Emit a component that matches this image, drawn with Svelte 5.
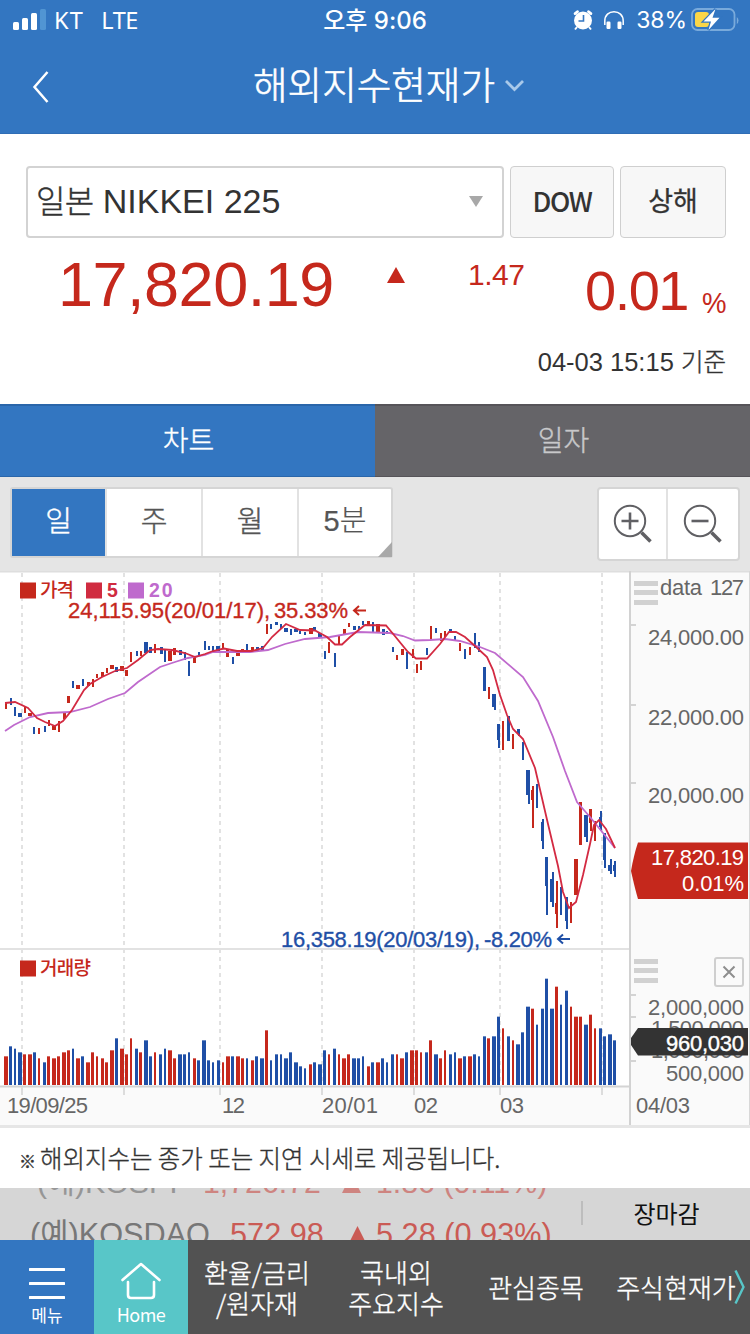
<script>
  const R = '#c5281c';
  const B = '#1f4fa6';

  // Sub-pixel units: every chart series is stored at three units per pixel.
  const priceGroups = [
    { x: 0, y: 1710, bars: [
      [18,398,415,'r'],[32,383,405,'b'],[45,410,437,'b'],[60,428,440,'b',12],[74,410,428,'r'],[90,430,440,'r',12],[103,470,490,'b'],[117,473,490,'r'],[134,467,485,'b'],[147,450,467,'r'],[162,467,480,'r',12],[177,453,485,'r'],[192,426,447,'r',9],[206,378,398,'r',9],[219,332,353,'b'],[234,344,355,'r',12],[249,327,349,'b'],[265,337,348,'r',9],[279,327,350,'r'],[291,312,323,'r'],[308,306,320,'r',9],[320,295,310,'r'],[336,285,297,'r',12],[350,290,305,'b',9],[367,288,302,'r',12],[380,300,319,'r',9],[393,245,275,'r'],[410,242,257,'b'],[422,244,258,'r'],[439,215,248,'b',12],[452,230,247,'b',9],[465,222,248,'r'],[483,230,252,'b',9],[495,240,277,'b'],[511,242,272,'r',12],[523,235,257,'r',9],[541,240,256,'b',9],[554,247,272,'b'],[567,272,316,'b'],[584,258,280,'r',9],[597,245,258,'b'],[615,212,240,'b'],[627,227,240,'b'],[640,228,247,'b'],[655,228,250,'b',10]
    ] },
    { x: 630, y: 1710, bars: [
      [10,228,250,'b'],[25,228,250,'b',12],[39,218,235,'r'],[54,237,262,'r',10],[69,260,280,'b'],[84,240,257,'r',12],[97,237,250,'r',9],[111,222,243,'b'],[128,232,248,'r',9],[141,232,243,'b',9],[157,229,242,'b',9],[170,162,193,'r'],[183,163,179,'b'],[200,155,165,'b',9],[213,162,178,'b'],[228,175,187,'b',12],[243,178,196,'b'],[258,178,188,'b',12],[271,182,190,'b'],[285,187,195,'b'],[302,174,193,'r',12],[314,171,184,'b',9],[331,190,205,'b',12],[344,242,265,'b'],[357,215,248,'r'],[375,248,290,'b'],[387,195,225,'r'],[402,177,195,'r',9],[417,160,173,'r'],[434,168,181,'b',9],[447,168,180,'b'],[460,153,165,'b'],[475,153,165,'r',9],[488,155,185,'b'],[504,162,187,'r',12],[519,177,195,'b',9],[532,184,193,'b'],[548,231,247,'b'],[561,256,271,'r'],[577,238,257,'r',9],[591,247,297,'b'],[608,237,265,'r'],[621,282,310,'r'],[633,273,301,'r']
    ] },
    { x: 1260, y: 1710, bars: [
      [20,235,257,'b'],[32,168,211,'r'],[48,174,190,'b'],[63,190,213,'r'],[75,182,200,'r'],[92,178,190,'b',9],[105,197,212,'b'],[121,218,243,'r'],[134,237,268,'b'],[151,232,256,'r'],[165,188,232,'b'],[177,215,244,'b'],[193,290,363,'b',8],[206,350,387,'r'],[222,371,410,'b',12],[225,400,422,'b'],[235,461,510,'b',8],[238,500,532,'b'],[249,453,541,'r'],[265,437,512,'b',9],[279,493,538,'r'],[294,476,490,'b',9],[297,480,497,'b'],[308,515,568,'b']
    ] },
    { x: 1260, y: 2280, bars: [
      [323,31,105,'b',12],[327,31,134,'b'],[335,90,120,'r'],[339,78,203,'r'],[351,73,146,'b'],[366,185,243,'b'],[369,177,268,'b'],[378,290,378,'b'],[381,290,465,'b'],[393,358,428,'b'],[399,336,440,'b'],[407,428,460,'r'],[411,362,502,'r'],[423,381,466,'b'],[438,410,483,'b'],[441,410,505,'b'],[453,426,490,'r'],[467,298,405,'r',12],[481,126,256,'r',9],[497,164,230,'b',12],[501,164,246,'b'],[511,146,187,'r',9],[513,146,212,'r'],[525,183,242,'r'],[540,170,200,'b'],[543,153,211,'b'],[553,219,300,'b',9],[555,219,325,'b'],[567,315,332,'b'],[573,297,342,'b'],[581,316,333,'b'],[585,303,352,'b']
    ] }
  ];

  const volumeGroups = [
    { x: 0, bars: [
      [18,409,'r',12],[31,379,'b',9],[45,386,'b',6],[60,397,'b',12],[73,403,'r',9],[90,403,'r',12],[103,397,'b',9],[117,415,'r',6],[133,427,'b',9],[145,409,'r',9],[162,415,'r',12],[175,409,'r',9],[192,397,'r',12],[205,391,'r',9],[219,386,'b',6],[234,415,'r',12],[247,409,'b',9],[264,427,'r',12],[277,397,'r',9],[291,409,'r',6],[307,415,'r',9],[319,427,'r',9],[336,391,'r',12],[349,355,'b',9],[366,386,'r',12],[379,403,'r',9],[393,355,'r',6],[409,386,'b',9],[421,397,'r',9],[438,361,'b',12],[451,409,'b',9],[465,397,'r',6],[481,403,'b',9],[495,386,'b',6],[510,391,'r',12],[523,415,'r',9],[540,403,'b',12],[553,403,'b',9],[567,397,'b',6],[583,415,'r',9],[595,421,'b',9],[612,361,'b',12],[625,421,'b',9],[639,427,'b',6],[655,421,'b',9],[669,427,'r',6],[684,409,'r',12],[697,409,'b',9],[714,409,'r',12],[727,415,'r',9],[741,415,'b',6],[757,421,'r',9],[769,409,'b',9],[786,415,'b',12],[799,331,'r',9],[813,421,'b',6],[829,403,'b',9],[843,403,'b',6],[858,415,'b',12],[871,397,'b',9],[888,427,'b',12],[901,439,'b',9],[915,445,'b',6]
    ] },
    { x: 930, bars: [
      [1,433,'r',9],[13,427,'b',9],[30,433,'b',12],[43,391,'b',9],[57,403,'r',6],[73,386,'b',9],[87,403,'r',6],[102,415,'r',12],[115,403,'r',9],[132,415,'b',12],[145,415,'b',9],[159,409,'b',6],[175,439,'r',9],[187,427,'b',9],[204,427,'r',12],[217,415,'b',9],[231,427,'b',6],[247,403,'b',9],[261,403,'r',6],[276,415,'r',12],[289,397,'b',9],[306,391,'r',12],[319,391,'r',9],[333,397,'r',6],[349,397,'b',9],[361,361,'r',9],[378,403,'b',12],[391,415,'r',9],[405,391,'r',6],[421,403,'b',9],[435,397,'b',6],[450,415,'r',12],[463,409,'b',9],[480,409,'r',12],[493,403,'b',9],[507,409,'b',6],[523,349,'b',9],[535,355,'r',9],[552,349,'b',12],[565,290,'b',9],[579,325,'r',6],[595,349,'b',9],[609,361,'r',6],[624,373,'b',12],[637,337,'b',9],[654,260,'b',12],[667,266,'r',9],[681,314,'b',6],[697,266,'b',9],[709,176,'b',9],[726,266,'b',12],[739,200,'r',9],[753,254,'b',6],[769,212,'b',9],[783,260,'r',6],[798,290,'r',12],[811,290,'r',9],[828,314,'b',12],[841,284,'r',9],[855,325,'r',6],[871,325,'b',9],[883,349,'b',9],[900,343,'b',12],[913,361,'b',9]
    ] }
  ];

  const color = (c) => (c === 'r' ? R : B);
  const candles = priceGroups.flatMap((g) =>
    g.bars.map(([x, a, b, c, w = 6]) => ({
      x: Math.round((g.x + x - w / 2) / 3), y: Math.round((g.y + a) / 3),
      w: Math.round(w / 3), h: Math.round((b - a) / 3), fill: color(c)
    }))
  );
  const volumes = volumeGroups.flatMap((g) =>
    g.bars.map(([x, top, c, w]) => ({
      x: Math.round((g.x + x - w / 2) / 3), y: 920 + top / 3, w: w / 3, h: (495 - top) / 3, fill: color(c)
    }))
  );

  const ma5 = '5,703 15,702 28,708 37,718 45,722 55,726 63,721 72,710 84,690 90,684 102,677 115,671 127,668 138,660 150,650 158,649 172,650 185,653 195,657 205,654 213,651 224,648.5 237,651 252,651 263,648 272,637 286,624 300,630 315,630.5 327,637 335,644.5 342,644.5 350,637 365,625 386,625.5 394,635 408,652 416,658.5 427,658.5 440,644 449,632 456,632 465,637 475,646 487,657 493,670 500,695 507,715 513,729 523,739 535,768 548,824 558,866 563,892 569,908 576,902 583,875 590,844 594,825 599,820 606,829 615,848';
  const ma20 = '5,731 14,725 30,717 48,713 70,712 90,707 108,699 125,693 138,682 160,667 175,662 188,658 205,655 213,652 250,652 268,650 285,644 305,639 330,637 358,632 390,633 403,636 415,640.5 430,640 445,639 460,641 480,647 495,653 523,677 538,701 553,737 565,771 577,802 590,817 603,833 615,848';

  const gridX = [22, 124, 220, 322, 414, 500, 602];
  const dates = [
    ['19/09/25', 7, 81], ['12', 222, 23], ['20/01', 322, 56], ['02', 414, 24], ['03', 500, 24], ['04/03', 636, 54]
  ];
  const prices = [['24,000.00', 644.5], ['22,000.00', 724.5], ['20,000.00', 802.5]];
</script>

<div class="app">
  <header>
    <div class="status">
      <div class="left">
        <svg width="34" height="22" viewBox="0 0 34 22">
          <rect x="0" y="13" width="6" height="8" rx="1.5" fill="#fff" />
          <rect x="9" y="9" width="6" height="12" rx="1.5" fill="#fff" />
          <rect x="18" y="4" width="6" height="17" rx="1.5" fill="#fff" />
          <rect x="27" y="0" width="6" height="21" rx="1.5" fill="#5195d3" />
        </svg>
        <span class="kt">KT</span><span class="lte">LTE</span>
      </div>
      <div class="time">오후 9:06</div>
      <div class="right">
        <svg width="20" height="22" viewBox="0 0 20 22">
          <circle cx="10" cy="11.5" r="9" fill="#fff" />
          <path d="M2 4.600 4.600 2.600M18 4.600 15.400 2.600" stroke="#fff" stroke-width="2.600" stroke-linecap="round" />
          <path d="M4 18 2 20.500M16 18l2 2.500" stroke="#fff" stroke-width="2" />
          <path d="M10.500 6v6H5.500" fill="none" stroke="#3376c1" stroke-width="1.600" />
        </svg>
        <svg class="phones" width="22" height="20" viewBox="0 0 22 20">
          <path d="M1.800 15V11C1.800 5 6 1.700 11 1.700S20.200 5 20.200 11v4" fill="none" stroke="#fff" stroke-width="1.500" />
          <rect x="3.500" y="11.500" width="4" height="7.500" rx="1.200" fill="#fff" />
          <rect x="14.500" y="11.500" width="4" height="7.500" rx="1.200" fill="#fff" />
        </svg>
        <span class="pct">38%</span>
        <svg width="48" height="26" viewBox="0 0 48 26">
          <rect x="1" y="2" width="42.500" height="21" rx="5.500" fill="none" stroke="#79aadb" stroke-width="1.800" />
          <path d="M45.800 10v7q1.700-1 1.700-3.500T45.800 10z" fill="#79aadb" />
          <rect x="4" y="5" width="14" height="15" rx="3" fill="#fad648" />
          <path d="M24.500 2 12.500 14.500h7.500L17.500 23 28.500 10.800h-7z" fill="#fff" stroke="#3376c1" stroke-width="2.500" paint-order="stroke" />
        </svg>
      </div>
    </div>
    <div class="titlebar">
      <svg class="back" width="18" height="34" viewBox="0 0 18 34"><path d="M15.500 2 2.500 17 15.500 32" fill="none" stroke="#fff" stroke-width="2.500" /></svg>
      <h1>해외지수현재가</h1>
      <svg width="22" height="14" viewBox="0 0 22 14"><path d="M2 1l8.500 8.500L19 1" fill="none" stroke="#a9c9ea" stroke-width="2.800" /></svg>
    </div>
  </header>

  <section class="quote">
    <div class="pick">
      <div class="select"><span><i>일본</i> NIKKEI 225</span>
        <svg width="14" height="12" viewBox="0 0 14 12"><path d="M0 0h14L7 11z" fill="#a8a8a8" /></svg>
      </div>
      <button class="dow">DOW</button>
      <button class="sh">상해</button>
    </div>
    <div class="values">
      <span class="price">17,820.19</span>
      <svg class="up" width="18" height="16" viewBox="0 0 18 16"><path d="M9 0l9 16H0z" fill="#c5281c" /></svg>
      <span class="diff">1.47</span>
      <span class="rate">0.01</span>
      <span class="unit">%</span>
    </div>
    <div class="asof">04-03 15:15 <i>기준</i></div>
  </section>

  <nav class="tabs"><div class="on">차트</div><div>일자</div></nav>

  <div class="tools">
    <div class="periods">
      <div class="on">일</div><div>주</div><div>월</div>
      <div class="more">5분<svg width="14" height="15" viewBox="0 0 14 15"><path d="M14 0v15H0z" fill="#a9a9a9" /></svg></div>
    </div>
    <div class="zooms">
      <div>
        <svg width="40" height="40" viewBox="0 0 40 40" fill="none" stroke="#606064"><circle cx="17" cy="17" r="15.200" stroke-width="2" /><path d="M17 8.500v17M8.500 17h17" stroke-width="2.600" /><path d="M28.500 28.500l9 9" stroke-width="3.600" /></svg>
      </div>
      <div>
        <svg width="40" height="40" viewBox="0 0 40 40" fill="none" stroke="#606064"><circle cx="17" cy="17" r="15.200" stroke-width="2" /><path d="M8.500 17h17" stroke-width="2.600" /><path d="M28.500 28.500l9 9" stroke-width="3.600" /></svg>
      </div>
    </div>
  </div>

  <svg class="chart" width="750" height="557" viewBox="0 571 750 557">
    <rect x="0" y="571" width="750" height="557" fill="#fff" />
    <rect x="0" y="1086" width="750" height="40" fill="#fafafa" />
    <rect x="630" y="571" width="120" height="555" fill="#fafafa" />
    <rect x="0" y="571" width="750" height="1.500" fill="#dedede" />
    <rect x="0" y="948" width="630" height="2" fill="#e2e2e2" />
    {#each gridX as x}
      <line x1={x} x2={x} y1="573" y2="1085" stroke="#e2e2e2" stroke-width="2" stroke-dasharray="4 4" />
    {/each}
    <g shape-rendering="crispEdges">
      {#each candles as c}<rect x={c.x} y={c.y} width={c.w} height={c.h} fill={c.fill} />{/each}
    </g>
    {#each volumes as v}<rect x={v.x} y={v.y} width={v.w} height={v.h} fill={v.fill} />{/each}
    <polyline points={ma20} fill="none" stroke="#bf6acd" stroke-width="1.800" />
    <polyline points={ma5} fill="none" stroke="#d32a42" stroke-width="1.800" />

    <rect x="0" y="1085.500" width="630" height="2" fill="#d4d4d4" />
    {#each gridX as x}<rect x={x - 1} y="1087" width="2" height="8" fill="#dcdcdc" />{/each}
    <rect x="629" y="571" width="2" height="555" fill="#d2d2d2" />
    <rect x="749" y="571" width="1" height="555" fill="#d8d8d8" />
    <rect x="0" y="1125" width="750" height="3" fill="#e6e6e6" />

    <rect x="20" y="582.500" width="16" height="16" fill={R} />
    <text class="ko" x="40" y="596.500" textLength="34" fill={R}>가격</text>
    <rect x="86" y="582.500" width="16" height="16" fill="#d02b40" />
    <text class="lg" x="107" y="597" fill="#d02b40">5</text>
    <rect x="128" y="582.500" width="16" height="16" fill="#bf6acd" />
    <text class="lg" x="149" y="597" textLength="23.500" fill="#bf6acd">20</text>
    <g class="note" fill={R} stroke={R}>
      <text x="68" y="618" textLength="196">24,115.95(20/01/17)</text>
      <text x="264" y="618">,</text>
      <text x="274" y="618" textLength="74">35.33%</text>
    </g>
    <path d="M366 610.500h-12M359 606l-5 4.500 5 4.500" fill="none" stroke={R} stroke-width="2" />
    <g class="note" fill={B} stroke={B}>
      <text x="281" y="946.500" textLength="193">16,358.19(20/03/19)</text>
      <text x="474" y="946.500">,</text>
      <text x="484" y="946.500" textLength="68">-8.20%</text>
    </g>
    <path d="M570 939h-12M563 934.500l-5 4.500 5 4.500" fill="none" stroke={B} stroke-width="2" />

    <rect x="20" y="960.500" width="16" height="16" fill={R} />
    <text class="ko" x="40" y="974.500" textLength="51" fill={R}>거래량</text>

    {#each [581, 590, 600, 959, 968, 978] as y}<rect x="634" {y} width="24" height="5" fill="#d1d1d1" />{/each}
    {#each [624, 704, 782, 994, 1016, 1060] as y}<rect x="631" {y} width="5" height="2" fill="#d4d4d4" />{/each}
    <g class="axis">
      <text x="660" y="594.500" textLength="42">data</text>
      <text x="710" y="594.500" textLength="34">127</text>
      {#each prices as [t, y]}<text x="648" {y} textLength="96">{t}</text>{/each}
      <text x="648" y="1014.500" textLength="96">2,000,000</text>
      <text x="651" y="1036" textLength="93">1,500,000</text>
      <text x="651" y="1058" textLength="93">1,000,000</text>
      <text x="666" y="1080.500" textLength="78">500,000</text>
      {#each dates as [t, x, w]}<text {x} y="1112.500" textLength={w}>{t}</text>{/each}
    </g>
    <path d="M638 842.500h110V899H638q-3-10-7-28 3-17 7-28.500z" fill={R} />
    <g class="axis tag">
      <text x="651" y="864.500" textLength="93">17,820.19</text>
      <text x="682" y="890.500" textLength="62">0.01%</text>
    </g>
    <path d="M638 1028h110v27.500H638L631 1045v-7z" fill="#333" />
    <text class="axis tag bold" x="666" y="1050.500" textLength="78">960,030</text>
    <rect x="715" y="958" width="28" height="28" rx="2" fill="#fafafa" stroke="#cfcfcf" stroke-width="2" />
    <path d="M723.500 966.500l11 11m0-11l-11 11" stroke="#8e8e8e" stroke-width="2" />
  </svg>

  <p class="notice"><b>※</b>해외지수는 종가 또는 지연 시세로 제공됩니다.</p>

  <div class="ticker">
    <div class="roll">
      <div class="line old"><span class="nm">(예)KOSPI</span><span class="v">1,726.72</span><svg class="t" width="19" height="19" viewBox="0 0 19 19"><path d="M9.500 0 19 19H0z" fill="#c94e48" /></svg><span class="d">1.86 (0.11%)</span></div>
      <div class="line new"><span class="nm">(예)KOSDAQ</span><span class="v">572.98</span><svg class="t" width="19" height="19" viewBox="0 0 19 19"><path d="M9.500 0 19 19H0z" fill="#c94e48" /></svg><span class="d">5.28 (0.93%)</span></div>
    </div>
    <div class="bar"></div>
    <div class="closed">장마감</div>
  </div>

  <footer>
    <div class="menu">
      <svg width="36" height="34" viewBox="0 0 36 34"><path d="M1 2.500h34M1 16.500h34M1 30.500h34" stroke="#fff" stroke-width="3" stroke-linecap="round" /></svg>
      <span>메뉴</span>
    </div>
    <div class="home">
      <svg width="40" height="38" viewBox="0 0 40 38" fill="none" stroke="#fff" stroke-width="2.600" stroke-linejoin="round" stroke-linecap="round"><path d="M1.500 18 20 2l18.500 16" /><path d="M7 20v13q0 3 3 3h20q3 0 3-3V20" /></svg>
      <span>Home</span>
    </div>
    <div class="item a">환율/금리<br />/원자재</div>
    <div class="item b">국내외<br />주요지수</div>
    <div class="item c">관심종목</div>
    <div class="item d">주식현재가</div>
    <svg class="next" width="11" height="36" viewBox="0 0 11 36"><path d="M1.500 1.500 9.500 18l-8 16.500" fill="none" stroke="#58c6c8" stroke-width="2.400" /></svg>
  </footer>
</div>

<style>
  :global(body) { background: #fff; }
  .app {
    width: 750px; height: 1334px; overflow: hidden; background: #fff;
    font-family: "Liberation Sans", "Noto Sans CJK KR", sans-serif; color: #333;
    display: flex; flex-direction: column;
  }
  i, b { font-style: normal; font-weight: inherit; }
  svg { display: block; flex: none; }
  header { background: #3376c1; height: 134px; color: #fff; flex: none; box-sizing: border-box; border-bottom: 1px solid #2f6db5; }
  .status { height: 40px; display: grid; grid-template-columns: 250px 250px 250px; align-items: center; }
  .left { display: flex; align-items: center; padding-left: 13px; font: 23.500px/30px "Noto Sans", sans-serif; }
  .left span { margin-top: -1px; }
  .left .kt { margin-left: 7px; letter-spacing: 1.300px; }
  .left .lte { margin-left: 17px; letter-spacing: -.4px; }
  .time { text-align: center; font: 500 24px/40px Inter, "Noto Sans CJK KR", sans-serif; white-space: nowrap; height: 40px; padding-top: 1px; box-sizing: border-box; }
  .right { display: flex; align-items: center; justify-content: flex-end; padding-right: 11px; font: 23px Inter, sans-serif; }
  .phones { margin-left: 10px; }
  .pct { margin: 0 4px 0 11px; white-space: nowrap; letter-spacing: -.1px; }
  .titlebar { height: 93px; display: flex; align-items: center; padding: 0 0 0 32px; box-sizing: border-box; }
  h1 { margin: -8px 9px 0 203px; font: 300 37.600px/80px "Noto Sans CJK KR", sans-serif; width: 242px; white-space: nowrap; -webkit-text-stroke: .6px; }

  .quote { height: 270px; flex: none; padding: 32px 24px 0 26px; box-sizing: border-box; }
  .pick { display: grid; grid-template-columns: 478px 104px 106px; grid-template-rows: 72px; gap: 6px; height: 72px; }
  .select { border: 2px solid #d3d3d3; border-radius: 4px; display: flex; align-items: center; justify-content: space-between; padding: 0 19px 0 8px; font-size: 34px; letter-spacing: 0; box-sizing: border-box; height: 72px; }
  .select i { font-family: "Noto Sans CJK KR"; font-size: 32px; font-weight: 300; letter-spacing: -.8px; -webkit-text-stroke: .4px; line-height: 1; }
  .select span { line-height: 66px; height: 68px; }
  button { background: #f7f7f7; border: 1.500px solid #cfcfcf; border-radius: 4px; color: #333; padding: 0 0 4px; font: 500 27px/60px "Noto Sans CJK KR", sans-serif; margin: 0; }
  .dow { letter-spacing: -1.400px; padding-bottom: 3px; }
  .sh { font-weight: 400; -webkit-text-stroke: .3px; }
  .values { height: 102px; display: flex; color: #c5281c; white-space: nowrap; line-height: 1; }
  .values > * { flex: none; }
  .price { font-size: 63px; width: 330px; padding-left: 32px; box-sizing: border-box; letter-spacing: -.5px; margin-top: 15px; }
  .up { margin: 29px 0 0 31px; }
  .diff { font-size: 30px; margin: 22px 0 0 63px; width: 57px; letter-spacing: -.5px; }
  .rate { font-size: 56px; margin: 25px 0 0 60px; width: 104px; letter-spacing: -1.500px; }
  .unit { font-size: 29px; margin: 51px 0 0 13px; transform: scaleX(.95); transform-origin: left; }
  .asof { text-align: right; font-size: 25.500px; line-height: 34px; white-space: nowrap; margin-top: 5px; }
  .asof i { font-family: "Noto Sans CJK KR"; font-weight: 300; font-size: 24.500px; -webkit-text-stroke: .4px; line-height: 1; }

  .tabs { display: grid; grid-template-columns: 1fr 1fr; height: 73px; flex: none; }
  .tabs div { background: #656468; color: #c8c8ca; text-align: center; font: 300 28px/67px "Noto Sans CJK KR"; border: solid #565459; border-width: 2px 0 1px; box-sizing: border-box; padding-left: 2px; -webkit-text-stroke: .4px; }
  .tabs .on { background: #3376c1; color: #fff; border-color: #2a66aa; }

  .tools { height: 94px; flex: none; background: #e5e5e5; display: flex; justify-content: space-between; padding: 10px 10px 0 10px; box-sizing: border-box; align-items: flex-start; }
  .periods, .zooms { display: grid; background: #fff; border: 2px solid #d5d5d5; border-radius: 3px; box-sizing: border-box; }
  .periods { grid-template-columns: 95px 96px 96px 92px; height: 71px; }
  .periods div { text-align: center; font: 300 29px/61px "Noto Sans CJK KR"; color: #555; border-right: 2px solid #e2e2e2; -webkit-text-stroke: .4px; height: 67px; box-sizing: border-box; }
  .periods .on { background: #3376c1; color: #fff; }
  .periods .more { border: 0; font-family: "Liberation Sans", "Noto Sans CJK KR"; line-height: 65px; position: relative; -webkit-text-stroke: .2px; }
  .more svg { position: absolute; right: -1px; bottom: -1px; }
  .zooms { grid-template-columns: 69px 70px; height: 74px; border-radius: 4px; }
  .zooms div { display: flex; justify-content: center; padding: 15px 0 0; }
  .zooms div:first-child { border-right: 2px solid #e2e2e2; }

  .chart { font-family: "Liberation Sans", sans-serif; font-size: 22px; }
  .ko { font: 500 19px "Noto Sans CJK KR"; }
  .lg { font-size: 19.500px; font-weight: 700; }
  .note { font-size: 22px; stroke-width: .35px; }
  .axis { fill: #666; font-size: 22px; }
  .tag { fill: #fff; }
  .tag.bold { stroke: #fff; stroke-width: .4px; }

  .notice { margin: 0; height: 60px; flex: none; padding-left: 19px; font: 300 24.450px/59px "Noto Sans CJK KR"; white-space: nowrap; -webkit-text-stroke: .35px; }
  .notice b { display: inline-block; width: 21px; font-size: 17px; }

  .ticker { height: 52px; flex: none; background: #d6d6d6; display: flex; overflow: hidden; }
  .roll { width: 581px; font-size: 30.700px; white-space: nowrap; }
  .line { display: flex; height: 44px; line-height: 44px; color: #c94e48; }
  .old { margin-top: -27px; opacity: .6; padding-left: 37px; font-size: 30.300px; }
  .new { padding-left: 30px; opacity: .9; margin-top: 8px; }
  .nm { color: #6d6d6d; width: 166px; }
  .new .nm { width: 200px; }
  .v { width: 139px; } .new .v { width: 118px; }
  .t { margin: 13px 15px 0 0; } .new .t { margin-right: 9px; }
  .bar { width: 2px; height: 24px; margin-top: 13px; background: #bdbdbd; }
  .closed { width: 167px; text-align: center; font: 400 24px/49px "Noto Sans CJK KR"; color: #111; }

  footer { height: 94px; flex: none; display: flex; background: #525252; color: #fff; position: relative; }
  .menu, .home { width: 94px; display: flex; flex-direction: column; align-items: center; box-sizing: border-box; }
  .menu { background: #3376c1; padding-top: 27px; }
  .home { background: #58c6c8; padding-top: 22px; }
  .menu span { font: 400 17px/24px "Noto Sans CJK KR"; margin-top: 2px; }
  .home span { font: 400 18px/26px "Noto Sans CJK KR"; margin-top: 1px; letter-spacing: -.6px; }
  .item { font: 300 26px/31px "Noto Sans CJK KR"; display: flex; align-items: center; justify-content: center; text-align: center; width: 140px; height: 93px; white-space: nowrap; -webkit-text-stroke: .35px; }
  .item.a { width: 138px; }
  .next { position: absolute; right: 5px; top: 29px; }
</style>
